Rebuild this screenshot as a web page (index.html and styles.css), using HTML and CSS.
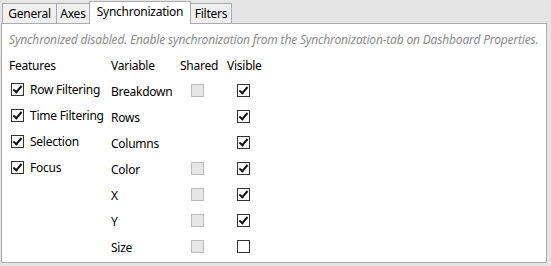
FILE: index.html
```html
<!DOCTYPE html>
<html lang="en">
<head>
    <meta charset="UTF-8">
    <title>Synchronization</title>
    <link rel="stylesheet" href="styles.css">
</head>
<body>
    <div class="tabs">
        <div class="tab general">General</div>
        <div class="tab axes">Axes</div>
        <div class="tab sync active">Synchronization</div>
        <div class="tab filters">Filters</div>
    </div>
    <div class="panel">
        <p class="note">Synchronized disabled. Enable synchronization from the Synchronization-tab on Dashboard Properties.</p>
        <div class="columns">
            <div class="features">
                <div class="head">Features</div>
                <label class="feature"><span class="box checked"></span>Row Filtering</label>
                <label class="feature"><span class="box checked"></span>Time Filtering</label>
                <label class="feature"><span class="box checked"></span>Selection</label>
                <label class="feature"><span class="box checked"></span>Focus</label>
            </div>
            <div class="vars">
                <div class="head">Variable</div>
                <div class="head">Shared</div>
                <div class="head">Visible</div>

                <div class="name">Breakdown</div>
                <div class="cell shared"><span class="box disabled"></span></div>
                <div class="cell"><span class="box checked"></span></div>

                <div class="name">Rows</div>
                <div class="cell shared"></div>
                <div class="cell"><span class="box checked"></span></div>

                <div class="name">Columns</div>
                <div class="cell shared"></div>
                <div class="cell"><span class="box checked"></span></div>

                <div class="name">Color</div>
                <div class="cell shared"><span class="box disabled"></span></div>
                <div class="cell"><span class="box checked"></span></div>

                <div class="name">X</div>
                <div class="cell shared"><span class="box disabled"></span></div>
                <div class="cell"><span class="box checked"></span></div>

                <div class="name">Y</div>
                <div class="cell shared"><span class="box disabled"></span></div>
                <div class="cell"><span class="box checked"></span></div>

                <div class="name">Size</div>
                <div class="cell shared"><span class="box disabled"></span></div>
                <div class="cell"><span class="box"></span></div>
            </div>
        </div>
    </div>
</body>
</html>
```

FILE: styles.css
```css
* {
    box-sizing: border-box;
    margin: 0;
    padding: 0;
}
body {
    font-family: 'Noto Sans', sans-serif;
    font-size: 12px;
    letter-spacing: -0.25px;
    color: #000;
    background-color: #e5e5e5;
    width: 551px;
    height: 266px;
    overflow: hidden;
    padding: 0 4px 0 1px;
}
.tabs {
    display: flex;
    align-items: flex-end;
    height: 23px;
    padding-left: 1px;
}
.tab {
    height: 20px;
    line-height: 19px;
    text-align: center;
    background-color: #f0f0f0;
    border: 1px solid #acacac;
    border-bottom: none;
    margin-right: -1px;
    white-space: nowrap;
}
.tab.general { width: 55px; }
.tab.axes { width: 34px; }
.tab.sync { width: 102px; }
.tab.filters { width: 42px; }
.tab.active {
    height: 23px;
    line-height: 20px;
    background-color: #fff;
    position: relative;
    z-index: 1;
    margin-bottom: -1px;
}
.panel {
    height: 240px;
    background-color: #fff;
    border: 1px solid #acacac;
    padding: 0 7px;
}
.note {
    color: #8c8c8c;
    font-style: italic;
    margin-top: 7px;
    line-height: 18px;
    white-space: nowrap;
    letter-spacing: -0.17px;
}
.columns {
    display: flex;
    margin-top: 7px;
}
.features {
    width: 102px;
}
.head {
    line-height: 20px;
    height: 20px;
}
.feature {
    display: flex;
    align-items: center;
    height: 26px;
    gap: 6px;
    padding-left: 2px;
    padding-top: 1px;
    white-space: nowrap;
}
.vars {
    display: grid;
    grid-template-columns: 69px 47px 40px;
    grid-template-rows: 20px;
    grid-auto-rows: 26px;
}
.name {
    padding-top: 7px;
    line-height: 18px;
}
.cell {
    padding-left: 10px;
    padding-top: 8px;
}
.cell.shared {
    padding-left: 11px;
}
.box {
    display: block;
    width: 13px;
    height: 13px;
    border: 1px solid #333;
    background-color: #fff;
    position: relative;
}
.feature .box {
    flex: none;
}
.box.checked::after {
    content: '';
    position: absolute;
    left: 3px;
    top: 0;
    width: 3px;
    height: 7px;
    border: solid #111;
    border-width: 0 2px 2px 0;
    transform: rotate(40deg);
}
.box.disabled {
    border-color: #bcbcbc;
    background-color: #e6e6e6;
}
```
